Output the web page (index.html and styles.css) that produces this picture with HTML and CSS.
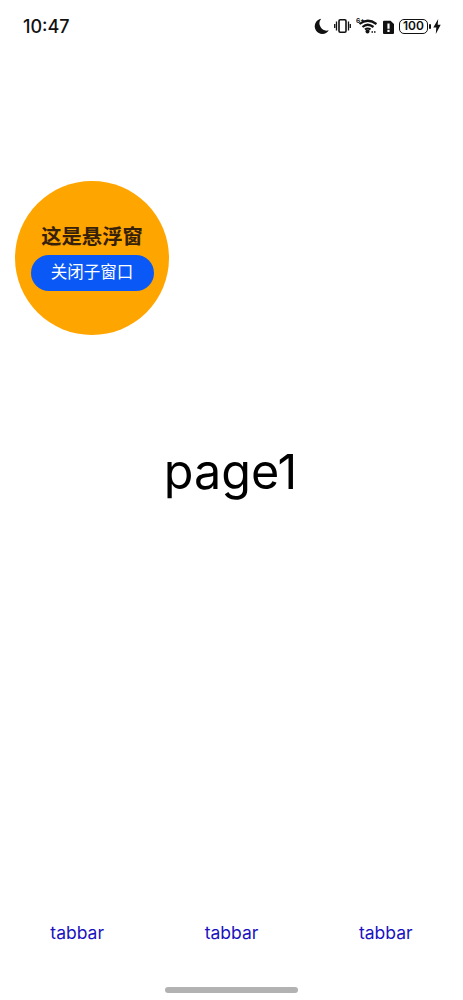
FILE: index.html
```html
<!DOCTYPE html>
<html lang="zh-CN">
<head>
    <meta charset="UTF-8">
    <meta name="viewport" content="width=device-width, initial-scale=1.0">
    <title>page1</title>
    <link rel="stylesheet" href="styles.css">
</head>
<body>
    <div class="screen">
        <div class="status-bar">
            <span class="clock">10:47</span>
            <div class="status-icons">
                <svg width="15" height="16" viewBox="0 0 15 16"><path d="M7.200 0.800A7.600 7.600 0 1 0 14.800 12.300 7.200 7.200 0 0 1 7.200 0.800z" fill="#111"/></svg>
                <svg class="icon-vibrate" width="17" height="16" viewBox="0 0 17 16" fill="none" stroke="#111"><rect x="5" y="1.800" width="7" height="12.400" rx="1.200" stroke-width="1.600"/><path d="M2.500 3.500v9M0.700 6v4M14.500 3.500v9M16.300 6v4" stroke-width="1.300"/></svg>
                <svg class="icon-wifi" width="21" height="18" viewBox="0 0 21 18" fill="none" stroke="#111" stroke-width="2.200"><text x="0" y="6.500" class="wifi-label">6+</text><path d="M3.500 8Q11.500 1.500 20.500 8M6.500 11Q11.500 6.500 17.500 11M9 13.500Q11.500 11.500 14.500 13.500"/><circle cx="11.500" cy="15.500" r="2" fill="#111" stroke="none"/><path d="M15.500 16h1.500M18 16h1.500" stroke-width="1.400"/></svg>
                <svg class="icon-alert" width="11" height="16" viewBox="0 0 11 16"><path d="M1.500 1.800H7.500L11 5v9A1 1 0 0 1 10 15H1A1 1 0 0 1 0 14V2.800A1 1 0 0 1 1 1.800z" fill="#111"/><path d="M4.400 4.500h2.200v5.200H4.400zM4.400 10.800h2.200v2.200H4.400z" fill="#fff"/></svg>
                <div class="battery"><span class="battery-body">100</span><span class="battery-cap"></span></div>
                <svg class="charge" width="8" height="15" viewBox="0 0 8 15"><path d="M5.200 0 0.300 8.500h3L2.800 15l4.900-9.200H4.700z" fill="#111"/></svg>
            </div>
        </div>

        <main class="page-body">
            <h1 class="page-title">page1</h1>
        </main>

        <nav class="tabbar">
            <span class="tab">tabbar</span>
            <span class="tab">tabbar</span>
            <span class="tab">tabbar</span>
        </nav>

        <div class="home-area">
            <div class="home-bar"></div>
        </div>

        <div class="float-window">
            <div class="float-title">这是悬浮窗</div>
            <div class="close-btn">关闭子窗口</div>
        </div>
    </div>
</body>
</html>
```

FILE: styles.css
```css
* {
    margin: 0;
    padding: 0;
    box-sizing: border-box;
}

body {
    font-family: Inter, "Noto Sans CJK SC", sans-serif;
    background-color: #fff;
    color: #000;
}

.screen {
    position: relative;
    height: 1000px;
    display: flex;
    flex-direction: column;
    overflow: hidden;
}

.status-bar {
    height: 52px;
    flex-shrink: 0;
    display: flex;
    justify-content: space-between;
    align-items: center;
    padding: 0 22px 0 23px;
}

.clock {
    font-size: 18px;
    font-weight: 500;
    color: #111;
}

.status-icons {
    display: flex;
    align-items: center;
}

.icon-vibrate {
    margin-left: 5px;
}

.icon-wifi {
    margin-left: 5px;
    margin-top: -2px;
}

.wifi-label {
    font-size: 6.500px;
    font-weight: 700;
    fill: #111;
    stroke: none;
}

.icon-alert {
    margin-left: 6px;
    margin-top: 1px;
}

.battery {
    display: flex;
    align-items: center;
    gap: 1px;
    margin-left: 5px;
}

.battery-body {
    width: 29px;
    height: 15px;
    border: 1.500px solid #111;
    border-radius: 5px;
    font-size: 12px;
    font-weight: 600;
    line-height: 12px;
    text-align: center;
    color: #111;
}

.battery-cap {
    width: 2px;
    height: 5px;
    background-color: #111;
    border-radius: 1px;
}

.charge {
    margin-left: 2px;
}

.page-body {
    flex: 1;
    display: flex;
    justify-content: center;
    align-items: center;
    padding: 0 2px 14px 0;
}

.page-title {
    font-size: 48.500px;
    font-weight: 400;
}

.tabbar {
    height: 56px;
    flex-shrink: 0;
    display: grid;
    grid-template-columns: repeat(3, 1fr);
    align-items: center;
    text-align: center;
}

.tab {
    font-size: 17.500px;
    color: #1a12c0;
}

.home-area {
    height: 40px;
    flex-shrink: 0;
    display: flex;
    justify-content: center;
    padding-top: 27px;
}

.home-bar {
    width: 133px;
    height: 6px;
    border-radius: 3px;
    background-color: #b2b2b2;
}

.float-window {
    position: absolute;
    left: 15px;
    top: 181px;
    width: 154px;
    height: 154px;
    border-radius: 50%;
    background-color: #ffa500;
    display: flex;
    flex-direction: column;
    align-items: center;
    padding-top: 43px;
}

.float-title {
    font-size: 20.300px;
    font-weight: 700;
    line-height: 26px;
    color: #35200a;
}

.close-btn {
    margin-top: 5px;
    width: 123px;
    height: 36px;
    border-radius: 18px;
    background-color: #0a59f7;
    color: #fff;
    font-size: 16.500px;
    line-height: 35px;
    text-align: center;
}
```
